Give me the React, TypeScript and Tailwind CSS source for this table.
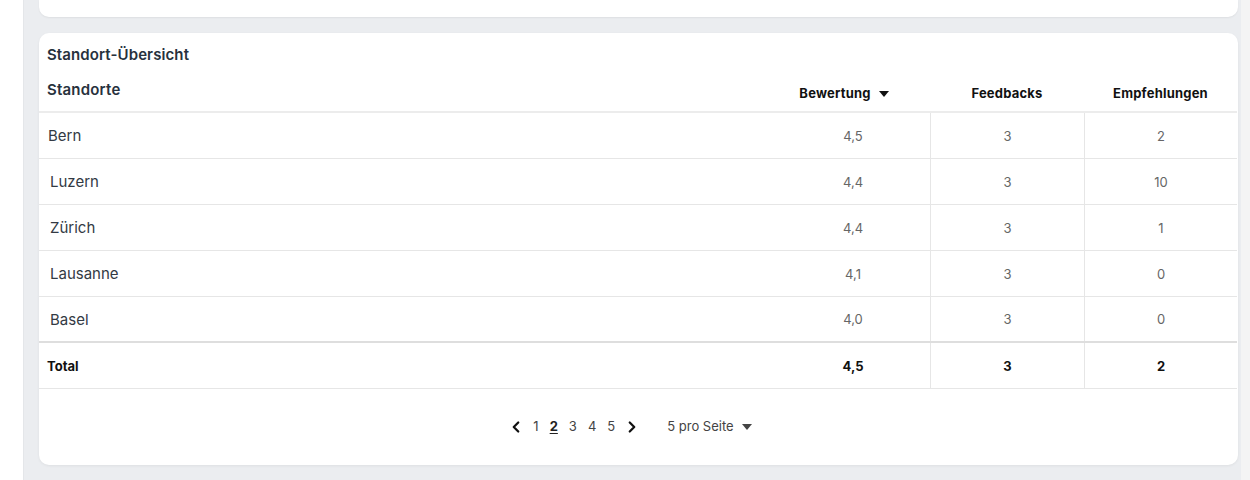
import { ChevronLeft, ChevronRight } from "lucide-react";

const rows = [
  { name: "Bern", rating: "4,5", feedbacks: "3", recs: "2", pl: "pl-[9px]" },
  { name: "Luzern", rating: "4,4", feedbacks: "3", recs: "10", pl: "pl-[11px]" },
  { name: "Zürich", rating: "4,4", feedbacks: "3", recs: "1", pl: "pl-[11px]" },
  { name: "Lausanne", rating: "4,1", feedbacks: "3", recs: "0", pl: "pl-[11px]" },
  { name: "Basel", rating: "4,0", feedbacks: "3", recs: "0", pl: "pl-[11px]" },
];

function Caret() {
  return (
    <svg width="10" height="6" viewBox="0 0 10 6" className="fill-current">
      <path d="M0 0h10L5 6z" />
    </svg>
  );
}

export default function App() {
  return (
    <div
      className="flex h-[480px] w-full overflow-hidden bg-white text-[#2b3440]"
      style={{ fontFamily: "Inter, 'Open Sans', sans-serif" }}
    >
      <div className="w-[24px] shrink-0 border-r border-[#e4e6e9] bg-white" />
      <main className="flex flex-1 flex-col bg-[#ebedf0] pl-[15px] pr-[3px]">
        {/* previous card, only its bottom visible */}
        <div className="h-[17px] rounded-b-[10px] bg-white shadow-[0_1px_2px_rgba(0,0,0,0.06)]" />

        <section className="mt-[16px] h-[432px] rounded-[10px] bg-white shadow-[0_1px_3px_rgba(0,0,0,0.06)]">
          <h2 className="pl-2 pt-[12px] text-[15px] font-semibold leading-5 tracking-[0.1px] text-[#27313d]">
            Standort-Übersicht
          </h2>

          <div className="mt-[5px] mr-[1px]">
            <div className="flex h-[43px] border-b-2 border-[#ececec] text-[13px] font-bold tracking-[0.2px] text-[#111]">
              <div className="flex-1 pl-2 pt-[9px] text-[15px] font-semibold text-[#27313d]">
                Standorte
              </div>
              <div className="flex w-[154px] items-center justify-center gap-[8px] pt-[6px] pr-[18px]">
                Bewertung
                <Caret />
              </div>
              <div className="flex w-[154px] items-center justify-center pt-[6px]">Feedbacks</div>
              <div className="flex w-[153px] items-center justify-center pt-[6px]">Empfehlungen</div>
            </div>

            {rows.map((r, i) => (
              <div
                key={r.name}
                className={`flex h-[46px] pt-[2px] ${
                  i === rows.length - 1 ? "border-b-2 border-[#dedede]" : "border-b border-[#e6e6e6]"
                }`}
              >
                <div className={`flex flex-1 items-center text-[15px] text-[#333a44] ${r.pl}`}>{r.name}</div>
                <div className="flex w-[154px] items-center justify-center text-[13px] text-[#666]">
                  {r.rating}
                </div>
                <div className="-mt-[2px] flex w-[154px] items-center justify-center border-l border-[#e6e6e6] pt-[2px] text-[13px] text-[#666]">
                  {r.feedbacks}
                </div>
                <div className="-mt-[2px] flex w-[153px] items-center justify-center border-l border-[#e6e6e6] pt-[2px] text-[13px] text-[#666]">
                  {r.recs}
                </div>
              </div>
            ))}

            <div className="flex h-[46px] border-b border-[#e6e6e6] pt-[2px] text-[13px] font-bold text-[#111]">
              <div className="flex flex-1 items-center pl-2">Total</div>
              <div className="flex w-[154px] items-center justify-center">4,5</div>
              <div className="-mt-[2px] flex w-[154px] items-center justify-center border-l border-[#e6e6e6] pt-[2px]">3</div>
              <div className="-mt-[2px] flex w-[153px] items-center justify-center border-l border-[#e6e6e6] pt-[2px]">2</div>
            </div>
          </div>

          <div className="mt-[28px] flex items-center justify-center pr-[18px] text-[13px] text-[#444]">
            <ChevronLeft size={18} strokeWidth={3} className="text-[#111]" />
            <div className="ml-[8px] flex items-center gap-[11px]">
              <span>1</span>
              <span className="font-bold text-[#222] underline underline-offset-2">2</span>
              <span>3</span>
              <span>4</span>
              <span>5</span>
            </div>
            <ChevronRight size={18} strokeWidth={3} className="ml-[8px] text-[#111]" />
            <div className="ml-[26px] flex items-center gap-[8px]">
              5 pro Seite
              <Caret />
            </div>
          </div>
        </section>
      </main>
      <div className="w-[9px] shrink-0 bg-[#f4f4f4]" />
    </div>
  );
}
